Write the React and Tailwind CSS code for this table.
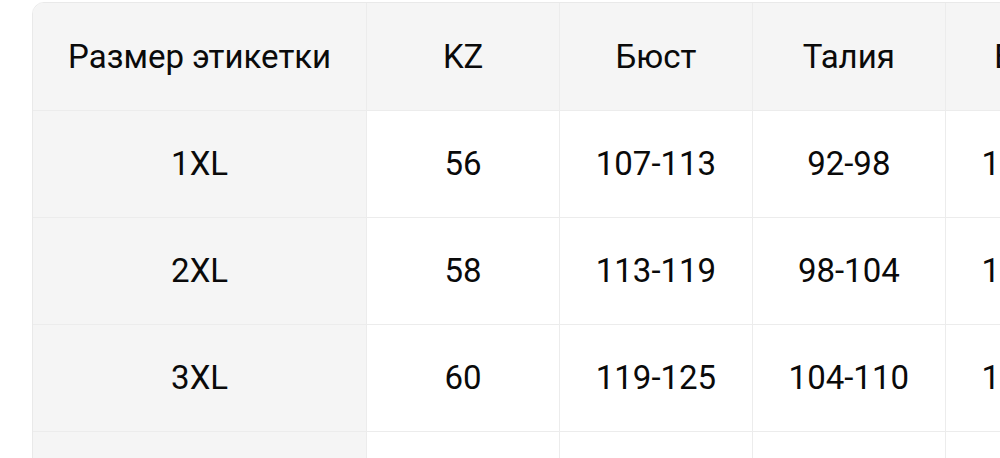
import React from 'react';

const headers = ['Размер этикетки', 'KZ', 'Бюст', 'Талия', 'Бедра', 'Рост'];
const rows = [
  ['1XL', '56', '107-113', '92-98', '113-119', '165-170'],
  ['2XL', '58', '113-119', '98-104', '119-125', '165-170'],
  ['3XL', '60', '119-125', '104-110', '125-131', '165-170'],
  ['4XL', '62', '125-131', '110-116', '131-137', '165-170'],
];

const colWidths = ['w-[334px]', 'w-[193px]', 'w-[193px]', 'w-[193px]', 'w-[193px]', 'w-[193px]'];

export default function App() {
  return (
    <div className="w-[1000px] h-[458px] overflow-hidden bg-white pl-[32px] pt-[2px]" style={{ fontFamily: 'Roboto, "Noto Sans", sans-serif' }}>
      <div className="w-[1300px] rounded-tl-[12px] border border-[#e9e9e9] overflow-hidden">
        <table className="border-collapse table-fixed text-[33px] font-normal text-[#0a0a0a]">
          <thead>
            <tr className="h-[107px] bg-[#f5f5f5]">
              {headers.map((h, i) => (
                <th key={h} className={`${colWidths[i]} font-normal text-center border-l border-[#ececec] first:border-l-0`}>
                  {h}
                </th>
              ))}
            </tr>
          </thead>
          <tbody>
            {rows.map((r) => (
              <tr key={r[0]} className="h-[107px]">
                {r.map((c, i) => (
                  <td
                    key={i}
                    className={`text-center border-t border-l border-[#ececec] first:border-l-0 ${i === 0 ? 'bg-[#f5f5f5]' : 'bg-white'}`}
                  >
                    {c}
                  </td>
                ))}
              </tr>
            ))}
          </tbody>
        </table>
      </div>
    </div>
  );
}
